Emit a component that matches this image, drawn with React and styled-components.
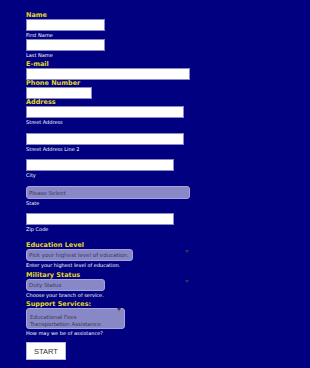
import styled, { createGlobalStyle } from "styled-components";

const GlobalStyle = createGlobalStyle`
  html, body {
    margin: 0;
    padding: 0;
    background: #000080;
  }
  body {
    font-family: "DejaVu Sans", Verdana, sans-serif;
  }
`;

const Form = styled.form`
  display: flex;
  flex-direction: column;
  align-items: flex-start;
  padding: 12px 0 12px 26px;
  min-height: 368px;
  box-sizing: border-box;
`;

const Group = styled.div`
  display: flex;
  flex-direction: column;
  align-items: flex-start;
  margin-top: ${(p) => p.$top || 0}px;
`;

const Label = styled.label`
  display: block;
  font-size: 6.5px;
  line-height: 7px;
  font-weight: bold;
  color: #e4d826;
`;

const Sub = styled.span`
  display: block;
  font-size: 5px;
  line-height: 6px;
  margin-top: 1px;
  color: #ffffff;
`;

const Input = styled.input`
  display: block;
  box-sizing: border-box;
  width: ${(p) => p.$w}px;
  height: 12px;
  margin: 0;
  padding: 0 2px;
  border: 1px solid #8a8ac4;
  background: #ffffff;
  font-size: 6px;
  outline: none;
`;

const SelectWrap = styled.div`
  position: relative;
  width: ${(p) => p.$w}px;
`;

const Select = styled.select`
  display: block;
  box-sizing: border-box;
  appearance: none;
  width: ${(p) => p.$w}px;
  height: ${(p) => p.$h || 12}px;
  margin: 0;
  padding: 0 2px;
  border: 1px solid #a6a6dc;
  border-radius: 3px;
  background: #8888c6;
  color: #3a3a58;
  font-family: "DejaVu Sans", Verdana, sans-serif;
  font-size: 5.5px;
  outline: none;
`;

const Arrow = styled.span`
  position: absolute;
  right: ${(p) => p.$right}px;
  top: ${(p) => p.$top}px;
  width: 0;
  height: 0;
  border-left: 2.5px solid transparent;
  border-right: 2.5px solid transparent;
  border-top: 3px solid #3a3244;
`;

const ListBox = styled.select`
  display: block;
  box-sizing: border-box;
  appearance: none;
  width: 99px;
  height: 21px;
  margin: 0;
  padding: 5px 3px 0;
  border: 1px solid #a6a6dc;
  border-radius: 3px;
  background: #8888c6;
  color: #3a3a58;
  font-family: "DejaVu Sans", Verdana, sans-serif;
  font-size: 5.5px;
  overflow: hidden;
  scrollbar-width: none;
  outline: none;

  option {
    padding: 0;
    line-height: 7px;
    height: 7px;
  }
`;

const Start = styled.button`
  margin-top: 6px;
  width: 40px;
  height: 18px;
  padding: 0;
  border: 1px solid #b8b8d8;
  background: #ffffff;
  color: #333333;
  font-family: "Liberation Sans", Arial, sans-serif;
  font-size: 7.5px;
`;

export default function App() {
  return (
    <>
      <GlobalStyle />
      <Form onSubmit={(e) => e.preventDefault()}>
        <Group>
          <Label>Name</Label>
          <Input $w={79} />
          <Sub>First Name</Sub>
        </Group>
        <Group $top={1}>
          <Input $w={79} />
          <Sub>Last Name</Sub>
        </Group>
        <Group $top={3}>
          <Label>E-mail</Label>
          <Input $w={164} />
        </Group>
        <Group>
          <Label>Phone Number</Label>
          <Input $w={66} />
        </Group>
        <Group>
          <Label>Address</Label>
          <Input $w={158} />
          <Sub>Street Address</Sub>
        </Group>
        <Group $top={8}>
          <Input $w={158} />
          <Sub>Street Address Line 2</Sub>
        </Group>
        <Group $top={7}>
          <Input $w={148} />
          <Sub>City</Sub>
        </Group>
        <Group $top={8}>
          <Select $w={164} $h={13} defaultValue="">
            <option value="">Please Select</option>
          </Select>
          <Sub>State</Sub>
        </Group>
        <Group $top={7}>
          <Input $w={148} />
          <Sub>Zip Code</Sub>
        </Group>
        <Group $top={10}>
          <Label>Education Level</Label>
          <SelectWrap $w={165}>
            <Select $w={107} defaultValue="">
              <option value="">Pick your highest level of education.</option>
            </Select>
            <Arrow $right={2} $top={1} />
          </SelectWrap>
          <Sub>Enter your highest level of education.</Sub>
        </Group>
        <Group $top={4}>
          <Label>Military Status</Label>
          <SelectWrap $w={165}>
            <Select $w={79} defaultValue="">
              <option value="">Duty Status</option>
            </Select>
            <Arrow $right={2} $top={1} />
          </SelectWrap>
          <Sub>Choose your branch of service.</Sub>
        </Group>
        <Group $top={3}>
          <Label>Support Services:</Label>
          <SelectWrap $w={99}>
            <ListBox multiple defaultValue={[]}>
              <option>Educational Fees</option>
              <option>Transportation Assistance</option>
              <option>Housing</option>
            </ListBox>
            <Arrow $right={4} $top={0} />
          </SelectWrap>
          <Sub>How may we be of assistance?</Sub>
        </Group>
        <Start type="submit">START</Start>
      </Form>
    </>
  );
}
